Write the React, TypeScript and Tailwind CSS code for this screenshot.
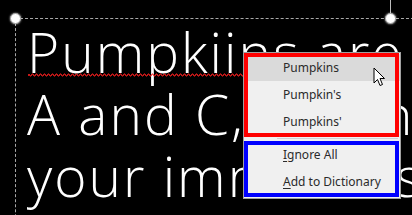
import React from "react";

const lines = ["Pumpkiins are rich in", "A and C, which are", "your immune system"];

function Handle({ className }: { className: string }) {
  return (
    <span
      className={`absolute h-[11px] w-[11px] rounded-full border border-[#9a9a9a] bg-white shadow-[0_0_2px_rgba(255,255,255,0.8)] ${className}`}
    />
  );
}

function Squiggle() {
  let d = "M0 3";
  for (let x = 0; x < 216; x += 2) {
    d += ` L${x + 1} ${x % 4 === 0 ? 1 : 3} L${x + 2} ${x % 4 === 0 ? 3 : 1}`;
  }
  return (
    <svg className="absolute left-[12px] top-[54px]" width="216" height="4" viewBox="0 0 216 4">
      <path d={d} fill="none" stroke="#ff2020" strokeWidth="1" />
    </svg>
  );
}

function MenuItem({ children, active }: { children: React.ReactNode; active?: boolean }) {
  return (
    <div
      className={`flex h-[27px] items-center pl-[39px] text-[12px] text-[#2b2b2b] ${
        active ? "bg-[#dadada]" : ""
      }`}
    >
      {children}
    </div>
  );
}

export default function App() {
  return (
    <div className="relative h-[215px] w-[412px] overflow-hidden bg-black">
      {/* rotation stem */}
      <span className="absolute left-[390px] top-0 h-[14px] w-px bg-[#bdbdbd]" />

      {/* text box selection */}
      <div className="absolute left-[15px] top-[18px] h-[300px] w-[800px] border-l border-t border-dashed border-[#a8a8a8]">
        <div
          className="pl-[11px] pt-[2px] text-[55px] font-light leading-[62px] tracking-[2px] text-white"
          style={{ fontFamily: '"Open Sans", "Noto Sans", sans-serif' }}
        >
          {lines.map((l) => (
            <div key={l} className="whitespace-nowrap">
              {l}
            </div>
          ))}
        </div>
        <Squiggle />
        <Handle className="-left-[6px] -top-[6px]" />
        <Handle className="left-[369px] -top-[6px]" />
      </div>

      {/* spelling context menu */}
      <div
        className="absolute left-[243px] top-[52px] w-[158px] border border-[#a0a0a0] bg-[#f0f0f0] pb-[3px] pt-px"
        style={{ fontFamily: '"Noto Sans", "Open Sans", sans-serif' }}
      >
        <MenuItem active>Pumpkins</MenuItem>
        <MenuItem>Pumpkin's</MenuItem>
        <MenuItem>Pumpkins'</MenuItem>
        <div className="flex h-[6px] items-center pl-[33px] pr-[2px]">
          <div className="h-px w-full bg-[#cfcfd6]" />
        </div>
        <MenuItem>
          <span>
            <span className="underline underline-offset-2">I</span>gnore All
          </span>
        </MenuItem>
        <MenuItem>
          <span>
            <span className="underline underline-offset-2">A</span>dd to Dictionary
          </span>
        </MenuItem>

        {/* annotation boxes */}
        <div className="absolute left-0 top-0 h-[84px] w-[155px] border-4 border-[#ff0000]" />
        <div className="absolute left-0 top-[88px] h-[56px] w-[155px] border-4 border-[#0000ff]" />

        {/* mouse pointer */}
        <svg className="absolute left-[129px] top-[14px]" width="13" height="20" viewBox="0 0 13 20">
          <path
            d="M1 1 L1 16 L4.5 12.5 L7 18.5 L9.5 17.5 L7 11.5 L11.5 11.5 Z"
            fill="white"
            stroke="black"
            strokeWidth="1"
            strokeLinejoin="round"
          />
        </svg>
      </div>
    </div>
  );
}
